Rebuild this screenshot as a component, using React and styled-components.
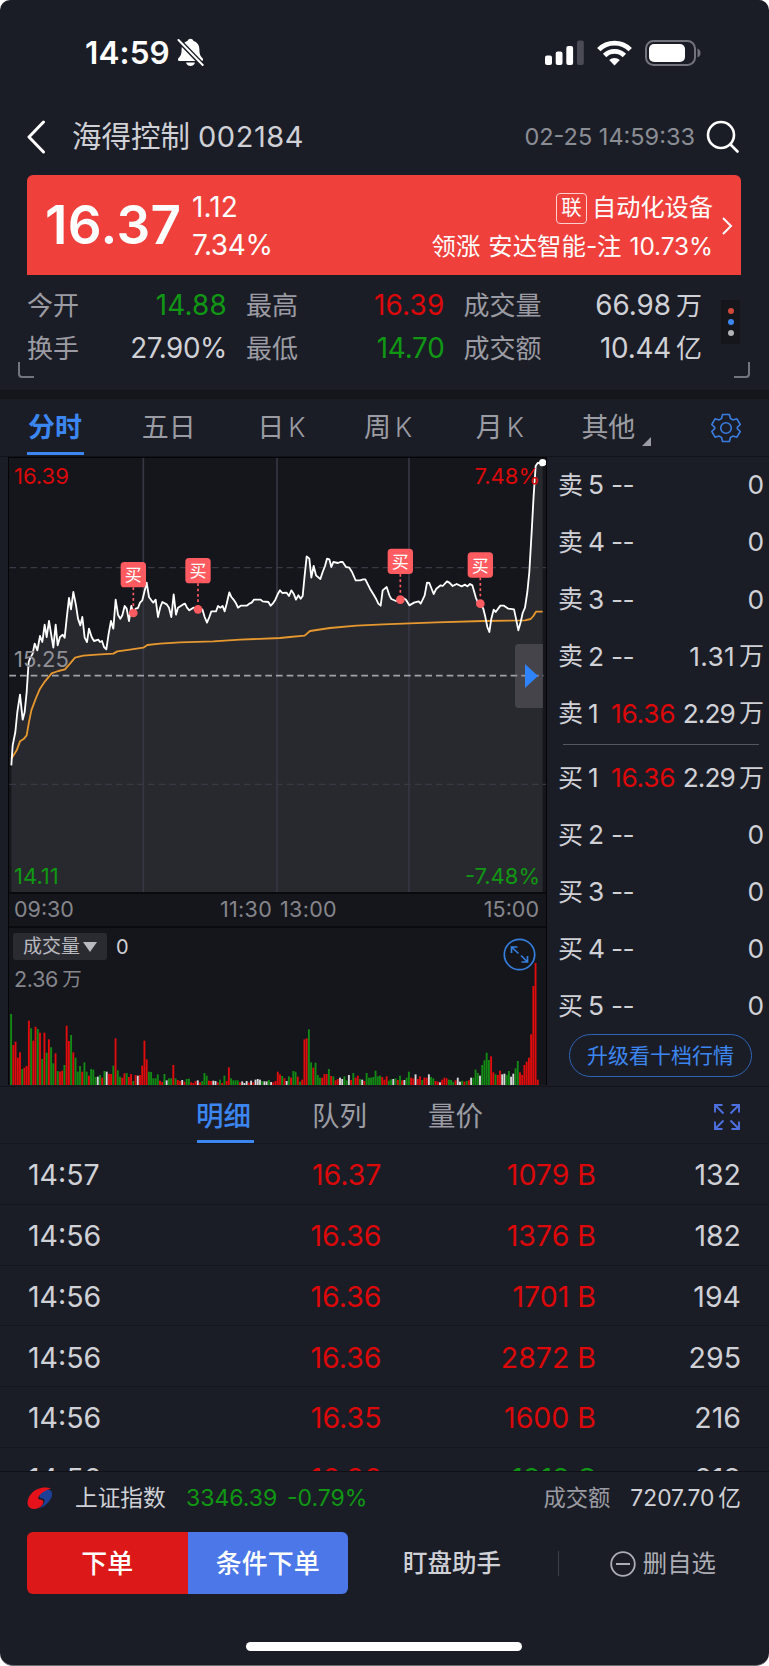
import React from 'react';
import styled, { createGlobalStyle } from 'styled-components';

const c = {
  bg: '#1b1d26',
  panel: '#15161b',
  text: '#d0d1d6',
  muted: '#9b9ca3',
  red: '#dc0809',
  green: '#109713',
  blue: '#3b86f0',
  line: '#15161d',
};

const Global = createGlobalStyle`
  *, *::before, *::after { box-sizing: border-box; }
  html, body { margin: 0; padding: 0; background: #fff; overflow: hidden; }
  body { font-family: Inter, "Noto Sans CJK SC", sans-serif; line-height: 1; }
  svg { display: block; flex: none; }
`;

const Screen = styled.main`
  width: 769px;
  height: 1666px;
  display: flex;
  flex-direction: column;
  background: ${c.bg};
  color: ${c.text};
  border-radius: 10px 10px 13px 13px;
  border-bottom: 1px solid #6b6c72;
  overflow: hidden;
  white-space: nowrap;
`;

/* ---------- status bar ---------- */
const StatusBar = styled.div`
  height: 104px;
  padding: 1px 68px 0 85px;
  display: flex;
  align-items: center;
`;
const Clock = styled.span`
  font-size: 31.5px;
  font-weight: 600;
  color: #fff;
  width: 92px;
  letter-spacing: 0.1px;
`;
const StatusIcons = styled.div`
  margin-left: auto;
  display: flex;
  align-items: center;
  gap: 13px;
`;

/* ---------- header ---------- */
const Header = styled.header`
  height: 71px;
  padding: 0 29px 6px 27px;
  display: flex;
  align-items: center;
`;
const Title = styled.h1`
  margin: 0 0 0 26px;
  font-size: 29.5px;
  font-weight: 400;
  display: flex;
  align-items: center;
  gap: 8px;
`;
const Code = styled.span`
  font-size: 29px;
  letter-spacing: 0.55px;
`;
const Stamp = styled.time`
  margin-left: auto;
  margin-right: 11px;
  font-size: 23.5px;
  color: #8b8d95;
`;

/* ---------- quote card ---------- */
const QuoteCard = styled.section`
  margin: 0 28px 0 27px;
  height: 100px;
  border-radius: 6px 6px 0 0;
  background: #ef403c;
  color: #fff;
  display: flex;
  align-items: center;
  padding: 1px 8px 0 18px;
`;
const Price = styled.strong`
  font-size: 53px;
  font-weight: 600;
  width: 147px;
  letter-spacing: 0.4px;
`;
const Stack = styled.div`
  display: flex;
  flex-direction: column;
  gap: ${(p) => p.$gap || 10}px;
  align-items: ${(p) => p.$align || 'flex-start'};
  margin-left: ${(p) => p.$push || '0'};
`;
const Change = styled.span`
  font-size: 28px;
  letter-spacing: ${(p) => p.$ls}px;
`;
const Sector = styled.div`
  height: 31px;
  display: flex;
  align-items: center;
  gap: 5px;
  font-size: 24.2px;
`;
const Tag = styled.span`
  width: 31px;
  height: 31px;
  border: 1px solid #fbd0cd;
  border-radius: 4px;
  display: grid;
  place-items: center;
  font-size: 20.5px;
`;
const Leader = styled.div`
  height: 24px;
  display: flex;
  align-items: center;
  font-size: 24.4px;
  gap: 8px;
  & > span:last-child { letter-spacing: -0.05px; }
`;

/* ---------- key figures ---------- */
const Figures = styled.section`
  position: relative;
  height: 115px;
  padding: 9px 28px 0 27px;
  display: flex;
`;
const FigureGrid = styled.div`
  width: 675px;
  height: 87px;
  display: grid;
  grid-template-columns: 200px 198.5px 238.5px;
  grid-template-rows: 43px 43px;
  column-gap: 19px;
`;
const Figure = styled.div`
  display: flex;
  align-items: center;
  justify-content: space-between;
  padding-top: 1px;
`;
const FigureLabel = styled.span`
  font-size: 26px;
  color: ${c.muted};
`;
const FigureValue = styled.span`
  font-size: 27.8px;
  letter-spacing: ${(p) => p.$ls}px;
  color: ${(p) => p.$color || c.text};
  display: flex;
  align-items: center;
  gap: 5px;
`;
const Unit = styled.span`
  font-size: ${(p) => p.$size || 26}px;
  letter-spacing: 0;
`;
const DotMenu = styled.div`
  margin: 16px 0 0 19px;
  width: 19px;
  height: 44px;
  background: #15161b;
  display: flex;
  flex-direction: column;
  align-items: center;
  justify-content: center;
  gap: 5px;
`;
const Dot = styled.i`
  width: 6px;
  height: 6px;
  border-radius: 50%;
  background: ${(p) => p.$color};
`;
const Corner = styled.i`
  position: absolute;
  top: 87px;
  ${(p) => (p.$right ? 'right: 19px; border-right: 2px solid #73757c; border-bottom-right-radius: 4px;' : 'left: 18px; border-left: 2px solid #73757c; border-bottom-left-radius: 4px;')}
  width: 16px;
  height: 16px;
  border-bottom: 2px solid #73757c;
`;
const Band = styled.div`
  height: 9px;
  background: ${c.panel};
`;

/* ---------- period tabs ---------- */
const Tabs = styled.nav`
  height: 58px;
  display: flex;
  padding: 0 28px 0 27px;
  border-bottom: 1px solid #12131a;
`;
const Tab = styled.div`
  width: ${(p) => p.$w}px;
  display: flex;
  align-items: center;
  font-size: 27px;
  color: ${(p) => (p.$active ? c.blue : c.muted)};
  font-weight: ${(p) => (p.$active ? 600 : 400)};
`;
const TabInner = styled.span`
  height: 56px;
  padding: 4px 0 0 1px;
  width: ${(p) => (p.$active ? '57px' : 'auto')};
  display: flex;
  align-items: center;
  gap: ${(p) => (p.$gap === undefined ? 4 : p.$gap)}px;
  align-self: flex-start;
  border-bottom: 3px solid ${(p) => (p.$active ? c.blue : 'transparent')};
`;
const Latin = styled.span`
  font-size: 26.5px;
  font-weight: 300;
`;

/* ---------- chart + order book ---------- */
const Market = styled.section`
  height: 630px;
  display: flex;
  border-bottom: 1px solid #13141a;
`;
const Charts = styled.div`
  width: 539px;
  margin-left: 8px;
  height: 628px;
  border-left: 1px solid #050508;
  border-right: 1px solid #050508;
  background: ${c.panel};
`;
const PriceChart = styled.div`
  position: relative;
  height: 437px;
  border-top: 1px solid #050508;
  border-bottom: 2px solid #0a0a0d;
`;
const ChartLabel = styled.span`
  position: absolute;
  left: ${(p) => (p.$right ? 'auto' : '5px')};
  right: ${(p) => (p.$right ? '6px' : 'auto')};
  top: ${(p) => p.$top}px;
  font-size: 22px;
  color: ${(p) => p.$color};
`;
const Handle = styled.div`
  position: absolute;
  right: 3px;
  top: 186px;
  width: 28px;
  height: 64px;
  border-radius: 4px 0 0 4px;
  background: rgba(120, 120, 125, 0.35);
  display: flex;
  align-items: center;
  padding-left: 10px;
`;
const TimeAxis = styled.div`
  height: 34px;
  padding: 0 7px 0 5px;
  display: grid;
  grid-template-columns: 206px 118px 1fr;
  align-items: center;
  font-size: 21.5px;
  color: #85868c;
  border-bottom: 2px solid #0a0a0f;
  & > span:nth-child(2) { display: flex; gap: 8px; letter-spacing: 0.3px; }
  & > span:last-child { text-align: right; }
`;
const VolumeChart = styled.div`
  position: relative;
  height: 157px;
`;
const VolumeHead = styled.div`
  position: absolute;
  left: 4px;
  top: 5px;
  display: flex;
  align-items: center;
  gap: 9px;
  font-size: 20px;
`;
const VolumePick = styled.span`
  width: 94px;
  height: 27px;
  border-radius: 3px;
  background: #2a2b31;
  font-size: 19px;
  color: #b9bac0;
  display: flex;
  align-items: center;
  justify-content: center;
  gap: 3px;
`;
const VolumeMax = styled.span`
  position: absolute;
  left: 5px;
  top: 41px;
  font-size: 21.5px;
  color: #85868c;
  display: flex;
  align-items: center;
  gap: 4px;
  letter-spacing: -0.3px;
`;
const ExpandRound = styled.div`
  position: absolute;
  right: 10px;
  top: 10px;
`;

const Book = styled.aside`
  flex: 1;
  padding: 0 5px 0 11px;
  display: flex;
  flex-direction: column;
`;
const BookRow = styled.div`
  height: 57.1px;
  display: flex;
  align-items: center;
  font-size: 26.3px;
`;
const BookSide = styled.span`
  width: 53px;
  display: flex;
  align-items: center;
  gap: 5px;
`;
const BookPrice = styled.span`
  color: ${(p) => (p.$up ? c.red : c.text)};
  letter-spacing: ${(p) => (p.$up ? '-0.25px' : '-0.5px')};
`;
const BookAmount = styled.span`
  margin-left: auto;
  display: flex;
  align-items: center;
  gap: 4px;
  letter-spacing: ${(p) => p.$ls || 0}px;
`;
const BookRule = styled.div`
  height: 1px;
  margin: 2px 5px 4px;
  background: #55565e;
`;
const Upgrade = styled.button`
  width: 183px;
  height: 43px;
  margin: -1px 0 0 11px;
  padding: 1px 0 0;
  font: inherit;
  font-size: 21px;
  color: ${c.blue};
  background: none;
  border: 1px solid #2f64b4;
  border-radius: 22px;
`;

/* ---------- ticks ---------- */
const TickTabs = styled.nav`
  height: 57px;
  padding: 0 29px 0 197px;
  display: flex;
  align-items: center;
  border-bottom: 1px solid ${c.line};
`;
const TickTab = styled.div`
  width: 57px;
  height: 56px;
  padding-top: 6px;
  margin-right: 59px;
  text-indent: -1px;
  display: flex;
  align-items: center;
  font-size: 27.5px;
  font-weight: ${(p) => (p.$active ? 500 : 400)};
  color: ${(p) => (p.$active ? c.blue : c.muted)};
  border-bottom: 3px solid ${(p) => (p.$active ? c.blue : 'transparent')};
`;
const PushRight = styled.div`
  margin-left: auto;
  padding-top: 3px;
`;
const Ticks = styled.div`
  height: 328px;
  overflow: hidden;
  border-bottom: 1px solid #101117;
`;
const Tick = styled.div`
  height: 60.8px;
  padding: 3px 28px 0 28px;
  display: grid;
  grid-template-columns: 159px 194.5px 214.5px 1fr;
  align-items: center;
  font-size: 28.5px;
  letter-spacing: 0;
  border-bottom: 1px solid ${c.line};
  & > span:not(:first-child) { text-align: right; }
`;
const Colored = styled.span`
  color: ${(p) => p.$color};
`;

/* ---------- index strip + actions ---------- */
const IndexStrip = styled.div`
  height: 52px;
  padding: 1px 28px 0 27px;
  display: flex;
  align-items: center;
  font-size: 22.7px;
`;
const IndexName = styled.span`
  width: 111px;
  margin-left: 22px;
`;
const IndexValue = styled.span`
  font-size: 23px;
  color: ${c.green};
  width: ${(p) => p.$w}px;
`;
const Turnover = styled.span`
  margin-left: auto;
  display: flex;
  align-items: center;
  & > b { font-weight: 400; color: ${c.muted}; margin-right: 20px; font-size: 22.3px; }
  & > span { margin-right: 4px; font-size: 22.8px; }
`;
const Actions = styled.div`
  margin-top: 8px;
  height: 62px;
  padding: 0 53px 0 27px;
  display: flex;
  align-items: center;
`;
const Order = styled.button`
  width: 160.5px;
  height: 62px;
  border: 0;
  padding: 1px 0 0;
  font: inherit;
  font-size: 26px;
  font-weight: 500;
  color: #fff;
  background: ${(p) => p.$bg};
  border-radius: ${(p) => (p.$first ? '6px 0 0 6px' : '0 6px 6px 0')};
`;
const Assist = styled.span`
  margin-left: 55px;
  padding-top: 1px;
  width: 155px;
  font-size: 24.5px;
  font-weight: 500;
`;
const Separator = styled.i`
  width: 1px;
  height: 25px;
  background: #3d3f49;
`;
const Remove = styled.span`
  margin-left: auto;
  padding-top: 1px;
  display: flex;
  align-items: center;
  gap: 7px;
  font-size: 24.4px;
  color: #adaeb5;
`;
const HomeBar = styled.div`
  width: 276px;
  height: 9px;
  margin: 48px 0 0 246px;
  border-radius: 5px;
  background: #fff;
`;

/* Chart geometry is in thirds of a pixel. */
const PRICE_POINTS =
  '34,960 38,900 46,860 52,800 60,748 68,823 74,800 80,740 86,650 90,640 98,625 104,595 112,615 120,572 127,590 134,538 140,575 147,527 154,570 160,607 167,538 173,600 180,575 188,568 194,577 200,520 207,458 213,492 220,440 228,480 234,520 241,540 247,515 254,577 261,590 267,550 275,575 282,587 295,583 300,590 306,587 312,605 319,612 326,565 333,527 340,550 347,463 354,508 361,520 367,510 374,482 380,490 387,527 394,482 400,503 407,490 414,488 420,472 427,465 433,440 440,412 447,455 454,465 460,472 467,463 474,515 481,485 487,470 500,477 507,487 514,515 521,447 528,508 534,487 548,478 555,475 561,487 568,495 580,487 594,490 607,492 614,515 621,532 628,515 634,498 648,498 654,482 661,487 668,482 674,498 680,475 688,441 694,455 700,462 707,472 714,487 722,481 740,481 748,475 755,472 762,463 782,463 788,468 805,470 812,481 818,475 826,463 833,447 840,435 ' +
  '847,443 860,442 867,452 874,435 881,445 888,463 895,450 902,460 908,452 914,390 920,333 928,340 934,397 941,362 948,390 961,401 968,380 975,362 981,340 988,342 994,365 1000,350 1014,353 1021,350 1028,350 1038,365 1048,367 1056,380 1067,405 1080,405 1090,402 1096,402 1110,430 1122,450 1128,460 1135,475 1142,481 1148,435 1160,425 1168,450 1174,461 1188,467 1201,463 1210,458 1218,463 1228,480 1242,472 1256,468 1262,475 1268,463 1274,450 1281,412 1288,413 1301,446 1309,430 1322,420 1328,422 1341,408 1348,412 1358,422 1370,416 1385,423 1395,418 1402,423 1410,416 1417,420 1428,458 1435,475 1441,475 1450,490 1456,515 1462,545 1468,560 1474,520 1481,493 1487,500 1501,481 1512,481 1525,490 1542,492 1548,520 1555,555 1562,530 1568,503 1575,487 1582,440 1588,380 1595,260 1601,150 1607,62 1613,53 1628,52';
const AVERAGE_POINTS =
  '34,940 50,915 60,888 72,880 80,870 86,835 94,795 108,758 120,730 135,708 155,684 175,677 195,672 210,655 225,637 250,631 290,628 340,625 352,618 390,613 430,607 442,599 480,595 540,591 640,588 720,583 840,578 870,575 914,571 930,557 990,548 1070,541 1150,537 1310,531 1450,527 1575,525 1592,521 1600,512 1608,499 1628,499';
const BUYS = [
  [400, 388, 503],
  [594, 376, 492],
  [1201, 348, 463],
  [1441, 359, 475],
];
const VOLUME =
  'g213 r120 r130 r82 r98 g48 r52 r57 r193 g170 r133 r175 g168 r157 g78 r157 g97 r137 g113 g65 r95 g42 r40 r43 g60 r178 r132 g150 r98 g82 g40 g57 r40 g68 g40 r28 g48 g46 g24 w25 g30 r22 g42 w40 r34 r33 g58 r140 g44 g25 r22 r35 g36 r24 r33 g12 r30 w28 r30 r58 r133 r77 g40 g39 g20 g20 g32 r13 r9 g33 w14 g20 g20 r60 g20 r15 r12 w15 r10 g18 g19 r8 r6 r12 w14 r8 g12 g36 g28 r13 r12 w13 w12 r8 g16 r6 g28 r12 r53 g20 g14 g14 g14 r8 w11 w6 w12 r7 w13 r8 w16 w18 w16 g12 w11 w11 g15 w9 r8 r12 r40 r32 g27 r20 w12 g26 r22 g42 g40 r25 g10 r16 r137 r140 g167 g68 r52 g67 g30 g22 r22 r33 r33 g48 r27 g26 r14 r18 w22 w18 g26 g14 w30 r15 g36 r22 r28 g18 w16 r12 g36 g22 g22 g24 g43 g26 g28 r24 r16 r26 g13 g17 w18 g20 r15 g28 r14 w15 g22 g40 r22 r20 w32 r18 r26 g15 r22 r22 w32 g24 g20 r12 r10 w8 r16 r22 r20 g16 g15 g9 r14 w22 w10 g13 r10 g12 r14 w22 g22 g46 g36 w28 g60 g74 g97 g75 r86 r38 g32 r30 r43 w32 w34 g30 g42 w25 w34 g50 g72 r38 r30 r60 r70 r82 r152 r297 r366 r16'
    .split(' ')
    .map((v) => [v[0], Number(v.slice(1))]);
const VOLUME_COLORS = { r: '#e20c0d', g: '#138a14', w: '#d9d9d9' };

const figures = [
  ['今开', '14.88', c.green, 0.25],
  ['最高', '16.39', c.red, 0.25],
  ['成交量', '66.98', c.text, 0, '万'],
  ['换手', '27.90%', c.text, -0.4],
  ['最低', '14.70', c.green, -0.2],
  ['成交额', '10.44', c.text, -0.2, '亿'],
];
const asks = [
  ['5', null, '0'],
  ['4', null, '0'],
  ['3', null, '0'],
  ['2', null, '1.31', '万', 0.3],
  ['1', '16.36', '2.29', '万', -0.9],
];
const bids = [
  ['1', '16.36', '2.29', '万', -0.9],
  ['2', null, '0'],
  ['3', null, '0'],
  ['4', null, '0'],
  ['5', null, '0'],
];
const ticks = [
  ['14:57', '16.37', '1079 B', '132'],
  ['14:56', '16.36', '1376 B', '182'],
  ['14:56', '16.36', '1701 B', '194'],
  ['14:56', '16.36', '2872 B', '295'],
  ['14:56', '16.35', '1600 B', '216'],
  ['14:56', '16.36', '1818 S', '218'],
];

const BellOff = () => (
  <svg width="27" height="29" viewBox="0 0 27 29">
    <path fill="#fff" d="M13.500 0.800c-1.700 0-2.800 1-3 2.300C6.500 4.400 4.600 7.500 4.600 11.500c0 5.300-1.200 6.700-2.800 8.300C.4 21.200.6 23 2.500 23h22c1.900 0 2.100-1.800.7-3.200C23.600 18.200 22.400 16.800 22.400 11.500c0-4-1.900-7.100-5.900-8.400-.2-1.300-1.300-2.300-3-2.300zM9.100 24.500h8.800c-.4 2.100-2.100 3.500-4.400 3.500s-4-1.400-4.400-3.500z" />
    <path d="M1 1.500 26 27.500" stroke={c.bg} strokeWidth="4.800" />
    <path d="M1.500 2 25.700 27" stroke="#fff" strokeWidth="2" strokeLinecap="round" />
  </svg>
);
const Signal = () => (
  <svg width="39" height="26" viewBox="0 0 39 26" fill="#fff">
    <rect x="0" y="15.500" width="7" height="9.500" rx="2" />
    <rect x="10.700" y="11.500" width="6.800" height="13.500" rx="2" />
    <rect x="21.300" y="6" width="6.800" height="19" rx="2" />
    <rect x="32" y="0.500" width="6.800" height="24.500" rx="2" fill="#4b4c53" />
  </svg>
);
const Wifi = () => (
  <svg width="35" height="26" viewBox="0 0 35 26" fill="none" stroke="#fff" strokeWidth="4.800">
    <path d="M1.800 9.600a22.200 22.200 0 0 1 31.400 0" />
    <path d="M7.600 15.500a14 14 0 0 1 19.800 0" />
    <path d="M17.500 25.500l-5.300-5.400a7.500 7.500 0 0 1 10.600 0z" fill="#fff" stroke="none" />
  </svg>
);
const Battery = () => (
  <svg width="56" height="26" viewBox="0 0 56 26">
    <rect x="1" y="1" width="49" height="24" rx="7.500" fill="none" stroke="#73747b" strokeWidth="2" />
    <rect x="4" y="4" width="36" height="18" rx="5" fill="#fff" />
    <path d="M52.500 8.500c1.900.7 3 2.400 3 4.500s-1.100 3.800-3 4.500z" fill="#73747b" />
  </svg>
);
const Gear = () => (
  <svg width="30" height="30" viewBox="0 0 30 30" fill="none" stroke="#3a7de0" strokeWidth="1.600" strokeLinejoin="round">
    <path d="M11.600 1.500h6.800l1.100 4 2.400 1.400 4-1.100 3.300 5.700-2.900 2.900v1.200l2.900 2.900-3.300 5.700-4-1.100-2.400 1.400-1.100 4h-6.800l-1.100-4-2.400-1.400-4 1.100-3.300-5.700 2.900-2.900v-1.200L.8 11.500l3.300-5.700 4 1.100 2.400-1.400z" />
    <circle cx="15" cy="15" r="5.300" />
  </svg>
);
const Logo = () => (
  <svg width="26" height="23" viewBox="0 0 26 23">
    <path fill="#1d3f97" d="M15 3.500c5-2 9.500-1.200 10 2.400 1.200 5-5.500 13-12.500 15.300 4.500-3.200 6.100-7.700 4.300-9.200-1.300-1.100-4.200-.5-4.400-2 0-1.800.9-5.200 2.600-6.500z" />
    <path fill="#e5121c" d="M24 1.500C18-.8 8.500.8 3.200 8-.8 13.500-.8 21.800 7 22c6.500.1 10.500-5.800 9-8.300-1-1.700-4.300-.8-4.700-2C10.500 9.400 15 4.200 24 1.500z" />
  </svg>
);

const IntradayChart = () => (
  <svg width="537" height="434" viewBox="27 38 1611 1302">
    <path d="M27 1340V38H1638V1340z" fill={c.panel} />
    <polygon points={`34,1340 ${PRICE_POINTS} 1628,1340`} fill="#28292e" />
    <g stroke="#363743" strokeWidth="5">
      <path d="M430 38V1340M831 38V1340M1227 38V1340" />
    </g>
    <g strokeWidth="4" fill="none">
      <path d="M28 367H1638M28 1017H1638" stroke="#383944" strokeDasharray="20 12" />
      <path d="M28 691H1630" stroke="#a1a1aa" strokeWidth="5" strokeDasharray="20 12" />
    </g>
    <polyline points={AVERAGE_POINTS} fill="none" stroke="#e6982f" strokeWidth="5.500" strokeLinejoin="round" />
    <polyline points={PRICE_POINTS} fill="none" stroke="#fff" strokeWidth="5.500" strokeLinejoin="round" />
    <circle cx="1628" cy="52" r="11" fill="#fff" />
    {BUYS.map(([x, box, dot]) => (
      <g key={x}>
        <path d={`M${x} ${box + 38}V${dot - 14}`} stroke="#ff5b60" strokeWidth="5" strokeDasharray="8 8" />
        <circle cx={x} cy={dot} r="13" fill="#ff5b60" />
        <rect x={x - 38} y={box - 38} width="76" height="76" rx="11" fill="#ff5b60" />
        <text x={x} y={box + 20} textAnchor="middle" fontSize="51" fill="#fff">买</text>
      </g>
    ))}
  </svg>
);

const VolumeBars = () => (
  <svg width="537" height="157" viewBox="27 442 1611 471">
    {VOLUME.map(([tone, h], i) => (
      <rect key={i} x={30.5 + i * 6.6667} y={913 - h} width="5.600" height={h} fill={VOLUME_COLORS[tone]} />
    ))}
  </svg>
);

const BookLine = ({ side, row: [level, price, amount, unit, ls] }) => (
  <BookRow>
    <BookSide><Unit $size={25}>{side}</Unit>{level}</BookSide>
    <BookPrice $up={!!price}>{price || '--'}</BookPrice>
    <BookAmount $ls={ls}>{amount}{unit && <Unit $size={25}>{unit}</Unit>}</BookAmount>
  </BookRow>
);

export default function App() {
  return (
    <Screen>
      <Global />
      <StatusBar>
        <Clock>14:59</Clock>
        <BellOff />
        <StatusIcons><Signal /><Wifi /><Battery /></StatusIcons>
      </StatusBar>

      <Header>
        <svg width="19" height="34" viewBox="0 0 19 34" fill="none" stroke="#fff" strokeWidth="3" strokeLinecap="round" strokeLinejoin="round">
          <path d="M16.500 2 2 17l14.500 15" />
        </svg>
        <Title>海得控制<Code>002184</Code></Title>
        <Stamp>02-25 14:59:33</Stamp>
        <svg width="34" height="34" viewBox="0 0 34 34" fill="none" stroke="#fff" strokeWidth="2.600" strokeLinecap="round">
          <circle cx="15" cy="15" r="13" />
          <path d="m24.500 24.500 7 7" />
        </svg>
      </Header>

      <QuoteCard>
        <Price>16.37</Price>
        <Stack><Change $ls={0.1}>1.12</Change><Change $ls={-0.4}>7.34%</Change></Stack>
        <Stack $align="flex-end" $push="auto">
          <Sector><Tag>联</Tag>自动化设备</Sector>
          <Leader><span>领涨</span><span>安达智能-注</span><span>10.73%</span></Leader>
        </Stack>
        <svg width="12" height="20" viewBox="0 0 12 20" fill="none" stroke="#fff" strokeWidth="2" style={{ marginLeft: 8 }}>
          <path d="m2 2 8 8-8 8" />
        </svg>
      </QuoteCard>

      <Figures>
        <FigureGrid>
          {figures.map(([label, value, color, ls, unit]) => (
            <Figure key={label}>
              <FigureLabel>{label}</FigureLabel>
              <FigureValue $color={color} $ls={ls}>{value}{unit && <Unit>{unit}</Unit>}</FigureValue>
            </Figure>
          ))}
        </FigureGrid>
        <DotMenu><Dot $color="#d0493a" /><Dot $color="#3b86f0" /><Dot $color="#b2b3b6" /></DotMenu>
        <Corner /><Corner $right />
      </Figures>
      <Band />

      <Tabs>
        <Tab $w={114} $active><TabInner $active>分时</TabInner></Tab>
        <Tab $w={116}><TabInner>五日</TabInner></Tab>
        <Tab $w={107}><TabInner>日<Latin>K</Latin></TabInner></Tab>
        <Tab $w={112}><TabInner>周<Latin>K</Latin></TabInner></Tab>
        <Tab $w={106}><TabInner>月<Latin>K</Latin></TabInner></Tab>
        <Tab $w={131}>
          <TabInner $gap={7}>
            其他
            <svg width="9" height="36" viewBox="0 0 9 36"><path d="M9 27v9H0z" fill={c.muted} /></svg>
          </TabInner>
        </Tab>
        <Tab><Gear /></Tab>
      </Tabs>

      <Market>
        <Charts>
          <PriceChart>
            <IntradayChart />
            <ChartLabel $top={7} $color={c.red}>16.39</ChartLabel>
            <ChartLabel $top={7} $color={c.red} $right>7.48%</ChartLabel>
            <ChartLabel $top={190} $color="#909096">15.25</ChartLabel>
            <ChartLabel $top={407} $color={c.green}>14.11</ChartLabel>
            <ChartLabel $top={407} $color={c.green} $right>-7.48%</ChartLabel>
            <Handle>
              <svg width="13" height="24" viewBox="0 0 13 24"><path d="M0 0 13 12 0 24z" fill="#2f83fb" /></svg>
            </Handle>
          </PriceChart>
          <TimeAxis>
            <span>09:30</span>
            <span><span>11:30</span><span>13:00</span></span>
            <span>15:00</span>
          </TimeAxis>
          <VolumeChart>
            <VolumeBars />
            <VolumeHead>
              <VolumePick>
                成交量
                <svg width="14" height="10" viewBox="0 0 14 10"><path d="M0 0h14L7 10z" fill="#b9bac0" /></svg>
              </VolumePick>
              0
            </VolumeHead>
            <VolumeMax>2.36<Unit $size={19.5}>万</Unit></VolumeMax>
            <ExpandRound>
              <svg width="33" height="33" viewBox="0 0 33 33" fill="none" stroke="#357fdd" strokeWidth="1.700">
                <circle cx="16.500" cy="16.500" r="15.200" />
                <path d="M8.500 15V9h6M8.500 9l7 6.500M24.500 18v6h-6M24.500 24l-6.500-6.500" />
              </svg>
            </ExpandRound>
          </VolumeChart>
        </Charts>
        <Book>
          {asks.map((r) => <BookLine key={r[0]} side="卖" row={r} />)}
          <BookRule />
          {bids.map((r) => <BookLine key={r[0]} side="买" row={r} />)}
          <Upgrade>升级看十档行情</Upgrade>
        </Book>
      </Market>

      <TickTabs>
        <TickTab $active>明细</TickTab>
        <TickTab>队列</TickTab>
        <TickTab>量价</TickTab>
        <PushRight>
          <svg width="26" height="26" viewBox="0 0 26 26" fill="none" stroke="#4d6fe0" strokeWidth="1.900">
            <path d="M1 8.500V1h7.500M1 1l8.500 8.500M17.500 1H25v7.500M25 1l-8.500 8.500M1 17.500V25h7.500M1 25l8.500-8.500M25 17.500V25h-7.500M25 25l-8.500-8.500" />
          </svg>
        </PushRight>
      </TickTabs>
      <Ticks>
        {ticks.map(([time, price, lots, count], i) => (
          <Tick key={i}>
            <span>{time}</span>
            <Colored $color={c.red}>{price}</Colored>
            <Colored $color={lots.endsWith('B') ? c.red : c.green}>{lots}</Colored>
            <span>{count}</span>
          </Tick>
        ))}
      </Ticks>

      <IndexStrip>
        <Logo />
        <IndexName>上证指数</IndexName>
        <IndexValue $w={101}>3346.39</IndexValue>
        <IndexValue>-0.79%</IndexValue>
        <Turnover><b>成交额</b><span>7207.70</span>亿</Turnover>
      </IndexStrip>
      <Actions>
        <Order $first $bg="#dc1818">下单</Order>
        <Order $bg="#4b77e9">条件下单</Order>
        <Assist>盯盘助手</Assist>
        <Separator />
        <Remove>
          <svg width="26" height="26" viewBox="0 0 26 26" fill="none" stroke="#adaeb5" strokeWidth="1.800">
            <circle cx="13" cy="13" r="11.800" />
            <path d="M6 13h14" />
          </svg>
          删自选
        </Remove>
      </Actions>
      <HomeBar />
    </Screen>
  );
}
